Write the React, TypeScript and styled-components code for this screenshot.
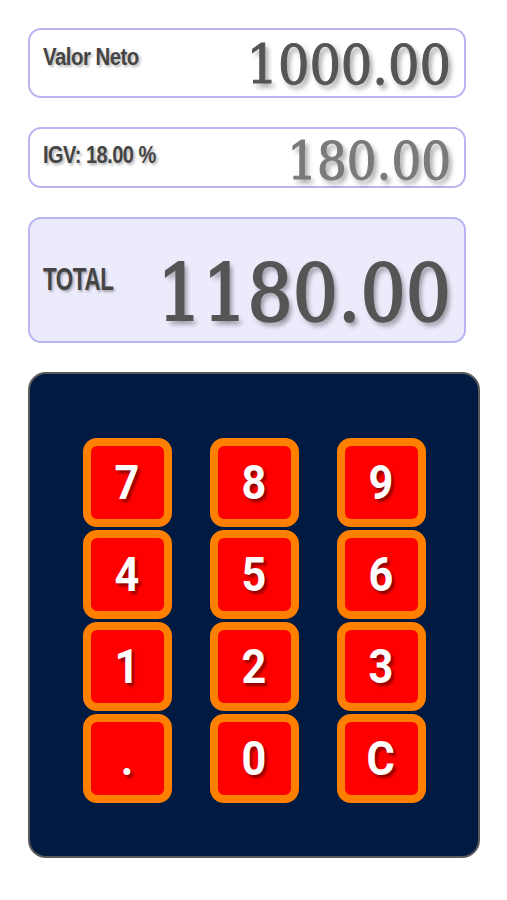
import styled, { createGlobalStyle } from 'styled-components'

const GlobalStyle = createGlobalStyle`
  html, body {
    margin: 0;
    padding: 0;
    background: #ffffff;
  }
`

const Page = styled.div`
  width: 507px;
  padding: 28px 0 0 28px;
  box-sizing: border-box;
  display: flex;
  flex-direction: column;
  gap: 29px;
`

const Display = styled.div<{ $height: number; $tinted?: boolean }>`
  width: 438px;
  height: ${(p) => p.$height}px;
  box-sizing: border-box;
  border: 2px solid #b9b5f2;
  border-radius: 13px;
  background: ${(p) => (p.$tinted ? '#ecebfc' : '#ffffff')};
  display: flex;
  align-items: center;
  justify-content: space-between;
  padding: 0 13px 0 13px;
`

// condensed bold label; squeeze narrows it like the original condensed face
const Label = styled.span<{ $size: number; $lift: number; $squeeze: number }>`
  font-family: 'Liberation Sans', Arial, sans-serif;
  font-weight: 700;
  font-size: ${(p) => p.$size}px;
  line-height: 1;
  letter-spacing: -0.6px;
  white-space: nowrap;
  color: #444;
  text-shadow: 2px 2px 3px rgba(0, 0, 0, 0.3);
  margin-bottom: ${(p) => p.$lift}px;
  transform: scaleX(${(p) => p.$squeeze});
  transform-origin: left center;
`

const Amount = styled.span<{ $size: number; $color: string; $drop: number; $stroke: number }>`
  font-family: 'DejaVu Serif Condensed', 'DejaVu Serif', serif;
  font-stretch: condensed;
  font-size: ${(p) => p.$size}px;
  color: ${(p) => p.$color};
  -webkit-text-stroke: ${(p) => p.$stroke}px ${(p) => p.$color};
  line-height: 1;
  white-space: nowrap;
  text-shadow: 3px 4px 5px rgba(0, 0, 0, 0.4);
  margin-top: ${(p) => p.$drop}px;
`

const Keypad = styled.div`
  width: 452px;
  height: 486px;
  box-sizing: border-box;
  background: #011a41;
  border: 2px solid #5a5a5a;
  border-radius: 18px;
  display: grid;
  grid-template-columns: repeat(3, 89px);
  grid-auto-rows: 89px;
  column-gap: 38px;
  row-gap: 3px;
  justify-content: center;
  align-content: start;
  padding-top: 64px;
`

const Key = styled.button`
  box-sizing: border-box;
  width: 89px;
  height: 89px;
  padding: 0;
  border: 8px solid #ff8000;
  border-radius: 14px;
  background: #ff0000;
  color: #ffffff;
  font-family: Roboto, 'Liberation Sans', sans-serif;
  font-weight: 700;
  font-size: 48px;
  line-height: 1;
  text-shadow: 3px 3px 3px rgba(110, 0, 0, 0.75);
  display: flex;
  align-items: center;
  justify-content: center;
  cursor: pointer;
`

const KeyFace = styled.span`
  display: inline-block;
  transform: scaleX(0.9);
`

const keys = ['7', '8', '9', '4', '5', '6', '1', '2', '3', '.', '0', 'C']

export default function App() {
  return (
    <>
      <GlobalStyle />
      <Page>
        <Display $height={70}>
          <Label $size={24} $lift={12} $squeeze={0.85}>Valor Neto</Label>
          <Amount $size={55} $color="#555555" $drop={4} $stroke={1}>1000.00</Amount>
        </Display>
        <Display $height={61}>
          <Label $size={23} $lift={4} $squeeze={0.87}>IGV: 18.00 %</Label>
          <Amount $size={52} $color="#7a7a7a" $drop={6} $stroke={1}>180.00</Amount>
        </Display>
        <Display $height={126} $tinted>
          <Label $size={32} $lift={3} $squeeze={0.7}>TOTAL</Label>
          <Amount $size={79} $color="#555555" $drop={28} $stroke={2}>1180.00</Amount>
        </Display>
        <Keypad>
          {keys.map((k) => (
            <Key key={k}>
              <KeyFace>{k}</KeyFace>
            </Key>
          ))}
        </Keypad>
      </Page>
    </>
  )
}
